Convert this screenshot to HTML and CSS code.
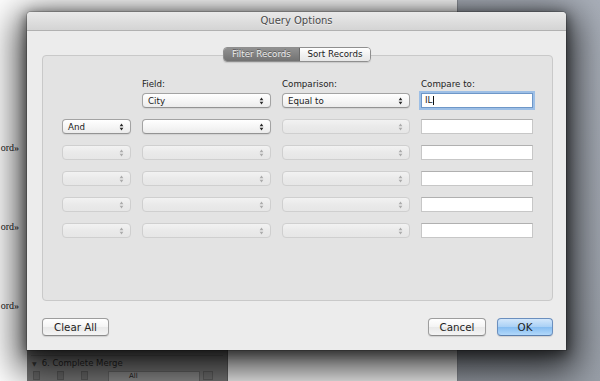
FILE: index.html
```html
<!DOCTYPE html>
<html>
<head>
<meta charset="utf-8">
<link rel="stylesheet" href="styles.css">
</head>
<body>
<svg class="defs" width="0" height="0">
  <symbol id="updown" viewBox="0 0 5 9"><path d="M2.5 0.6 L4.6 3.6 H0.4 Z M2.5 8.4 L0.4 5.4 H4.6 Z"/></symbol>
</svg>
<div class="desk">
  <div class="doc">
    <div class="doc-col">
      <div class="doc-line">ord»</div>
      <div class="doc-line">ord»</div>
      <div class="doc-line">ord»</div>
    </div>
  </div>
  <div class="side"></div>
</div>

<div class="palette">
  <div class="pal-sep"></div>
  <div class="pal-head"><span class="pal-tri">▼</span>6. Complete Merge</div>
  <div class="pal-tools">
    <span class="pal-icon"></span>
    <span class="pal-icon"></span>
    <span class="pal-icon"></span>
    <span class="pal-pop">All</span>
    <span class="pal-sq"></span>
  </div>
</div>

<div class="dialog">
  <div class="titlebar">Query Options</div>
  <div class="tabs">
    <div class="seg">
      <span class="seg-item seg-on">Filter Records</span>
      <span class="seg-item seg-off">Sort Records</span>
    </div>
  </div>
  <div class="group">
    <div class="labels">
      <span></span>
      <span class="label">Field:</span>
      <span class="label">Comparison:</span>
      <span class="label">Compare to:</span>
    </div>
    <div class="grid">
      <span></span>
      <span class="pop"><span>City</span><svg class="arr"><use href="#updown"/></svg></span>
      <span class="pop"><span>Equal to</span><svg class="arr"><use href="#updown"/></svg></span>
      <span class="field focus">IL<span class="caret"></span></span>

      <span class="pop"><span>And</span><svg class="arr"><use href="#updown"/></svg></span>
      <span class="pop"><span></span><svg class="arr"><use href="#updown"/></svg></span>
      <span class="pop off"><span></span><svg class="arr"><use href="#updown"/></svg></span>
      <span class="field"></span>

      <span class="pop off"><span></span><svg class="arr"><use href="#updown"/></svg></span>
      <span class="pop off"><span></span><svg class="arr"><use href="#updown"/></svg></span>
      <span class="pop off"><span></span><svg class="arr"><use href="#updown"/></svg></span>
      <span class="field"></span>

      <span class="pop off"><span></span><svg class="arr"><use href="#updown"/></svg></span>
      <span class="pop off"><span></span><svg class="arr"><use href="#updown"/></svg></span>
      <span class="pop off"><span></span><svg class="arr"><use href="#updown"/></svg></span>
      <span class="field"></span>

      <span class="pop off"><span></span><svg class="arr"><use href="#updown"/></svg></span>
      <span class="pop off"><span></span><svg class="arr"><use href="#updown"/></svg></span>
      <span class="pop off"><span></span><svg class="arr"><use href="#updown"/></svg></span>
      <span class="field"></span>

      <span class="pop off"><span></span><svg class="arr"><use href="#updown"/></svg></span>
      <span class="pop off"><span></span><svg class="arr"><use href="#updown"/></svg></span>
      <span class="pop off"><span></span><svg class="arr"><use href="#updown"/></svg></span>
      <span class="field"></span>
    </div>
  </div>
  <div class="buttons">
    <button class="btn btn-clear">Clear All</button>
    <span class="spacer"></span>
    <button class="btn btn-cancel">Cancel</button>
    <button class="btn btn-ok">OK</button>
  </div>
</div>
</body>
</html>
```

FILE: styles.css
```css
* { box-sizing: border-box; }
html, body {
  margin: 0;
  padding: 0;
  width: 600px;
  height: 381px;
  overflow: hidden;
}
body {
  position: relative;
  font-family: "DejaVu Sans", sans-serif;
  background: #ffffff;
}
.defs { position: absolute; }

/* backdrop */
.desk {
  display: grid;
  grid-template-columns: 457px 1fr;
  height: 381px;
}
.doc {
  background: #ffffff;
}
.doc-col {
  width: 19px;
  display: flex;
  flex-direction: column;
  align-items: flex-end;
  gap: 67px;
  padding-top: 142px;
}
.doc-line {
  white-space: nowrap;
  height: 12px;
  line-height: 12px;
  font-family: "Liberation Serif", serif;
  font-size: 10px;
  color: #222;
}
.side {
  background: linear-gradient(#a9afb9, #9aa0a9);
  border-left: 1px solid #8e929a;
}

/* palette behind dialog */
.palette {
  position: absolute;
  left: 27px;
  top: 250px;
  width: 201px;
  height: 131px;
  background: #7c7c7c;
  border-right: 1px solid #666;
  display: flex;
  flex-direction: column;
  padding-top: 104px;
}
.pal-sep {
  height: 3px;
  margin: 0 4px;
  border-bottom: 1px solid #6a6a6a;
}
.pal-head {
  height: 13px;
  margin-top: 1px;
  line-height: 13px;
  font-size: 8.5px;
  color: #262626;
  padding-left: 5px;
  display: flex;
  align-items: center;
}
.pal-tri {
  font-size: 6px;
  color: #3a3a3a;
  margin-right: 5px;
}
.pal-tools {
  display: flex;
  align-items: flex-start;
  gap: 17px;
  padding: 1px 0 0 6px;
}
.pal-icon {
  width: 7px;
  height: 9px;
  background: #6e6e6e;
  border: 1px solid #5e5e5e;
}
.pal-pop {
  width: 92px;
  height: 10px;
  margin-left: 3px;
  background: #929292;
  border: 1px solid #6a6a6a;
  border-bottom: 0;
  font-size: 7px;
  line-height: 8px;
  padding-left: 20px;
  color: #222;
}
.pal-sq {
  width: 10px;
  height: 9px;
  margin-left: -14px;
  background: #767676;
  border: 1px solid #626262;
}

/* dialog */
.dialog {
  position: absolute;
  left: 27px;
  top: 12px;
  width: 539px;
  height: 338px;
  background: #ececec;
  border-radius: 4px 4px 0 0;
  box-shadow: 0 12px 36px 10px rgba(0, 0, 0, 0.72), 0 3px 12px 2px rgba(0, 0, 0, 0.45), 0 0 0 1px rgba(0, 0, 0, 0.18);
  display: flex;
  flex-direction: column;
}
.titlebar {
  height: 19px;
  line-height: 18px;
  background: linear-gradient(#e9e9e9, #d4d4d4);
  border-bottom: 1px solid #b1b1b1;
  border-radius: 4px 4px 0 0;
  text-align: center;
  font-size: 10px;
  color: #4a4a4a;
  text-shadow: 0 1px 0 rgba(255, 255, 255, 0.6);
}
.tabs {
  display: flex;
  justify-content: center;
  margin-top: 16px;
  position: relative;
  z-index: 1;
}
.seg {
  display: flex;
  height: 15px;
  border: 1px solid #8f8f8f;
  border-radius: 4px;
  overflow: hidden;
  box-shadow: 0 1px 1px rgba(0, 0, 0, 0.12);
  margin-left: 1px;
}
.seg-item {
  font-size: 8.7px;
  line-height: 13px;
  padding: 0;
  text-align: center;
  white-space: nowrap;
}
.seg-on {
  width: 76px;
  background: linear-gradient(#919191, #727272);
  color: #ededed;
  text-shadow: 0 -1px 0 rgba(0, 0, 0, 0.35);
  border-right: 1px solid #6a6a6a;
}
.seg-off {
  width: 70px;
  background: linear-gradient(#ffffff, #f0f0f0 55%, #e7e7e7);
  color: #1c1c1c;
}
.group {
  margin: -7px 13px 0 15px;
  height: 246px;
  background: #e3e3e3;
  border: 1px solid #c9c9c9;
  border-radius: 4px;
  padding: 22px 0 0 19px;
}
.labels,
.grid {
  display: grid;
  grid-template-columns: 69px 129px 128px 112px;
  column-gap: 11px;
}
.labels {
  height: 12px;
  margin-bottom: 3px;
}
.grid {
  grid-template-rows: repeat(6, 15px);
  row-gap: 11px;
}
.label {
  font-size: 8.7px;
  line-height: 12px;
  color: #222;
}
.pop {
  height: 15px;
  border: 1px solid #a3a3a3;
  border-bottom-color: #939393;
  border-radius: 4px;
  background: linear-gradient(#ffffff, #f6f6f6 50%, #ececec);
  box-shadow: 0 1px 1px rgba(0, 0, 0, 0.08);
  display: flex;
  align-items: center;
  justify-content: space-between;
  padding: 0 6px 0 5px;
  font-size: 8.7px;
  color: #1a1a1a;
}
.arr {
  width: 5px;
  height: 8px;
  fill: #2a2a2a;
}
.pop.off {
  border-color: #cfcfcf;
  background: linear-gradient(#f2f2f2, #eaeaea 50%, #e6e6e6);
  box-shadow: none;
}
.pop.off .arr {
  fill: #ababab;
}
.field {
  height: 15px;
  background: #ffffff;
  border: 1px solid #c7c7c7;
  border-top-color: #b0b0b0;
  font-size: 8.7px;
  line-height: 13px;
  padding-left: 3px;
  color: #1a1a1a;
  display: flex;
  align-items: center;
}
.field.focus {
  border-color: #6e97c8;
  box-shadow: 0 0 0 2px #9dbfe6;
}
.caret {
  width: 1px;
  height: 9px;
  background: #111;
  margin-left: 1px;
}
.buttons {
  display: flex;
  margin: 17px 13px 0 15px;
  gap: 11px;
}
.spacer { flex: 1; }
.btn {
  height: 18px;
  margin: 0;
  padding: 0;
  border: 1px solid #9d9d9d;
  border-bottom-color: #8a8a8a;
  border-radius: 4px;
  background: linear-gradient(#ffffff, #f4f4f4 50%, #e9e9e9 51%, #f4f4f4);
  box-shadow: 0 1px 1px rgba(0, 0, 0, 0.12);
  font-family: "DejaVu Sans", sans-serif;
  font-size: 10.3px;
  color: #1e1e1e;
}
.btn-clear { width: 67px; }
.btn-cancel { width: 58px; }
.btn-ok {
  width: 56px;
  border-color: #6b8fbe;
  border-bottom-color: #5a7eac;
  background: linear-gradient(#d3e7fb, #a9d0f5 50%, #86bdf1 51%, #b2d8fa);
}
```
